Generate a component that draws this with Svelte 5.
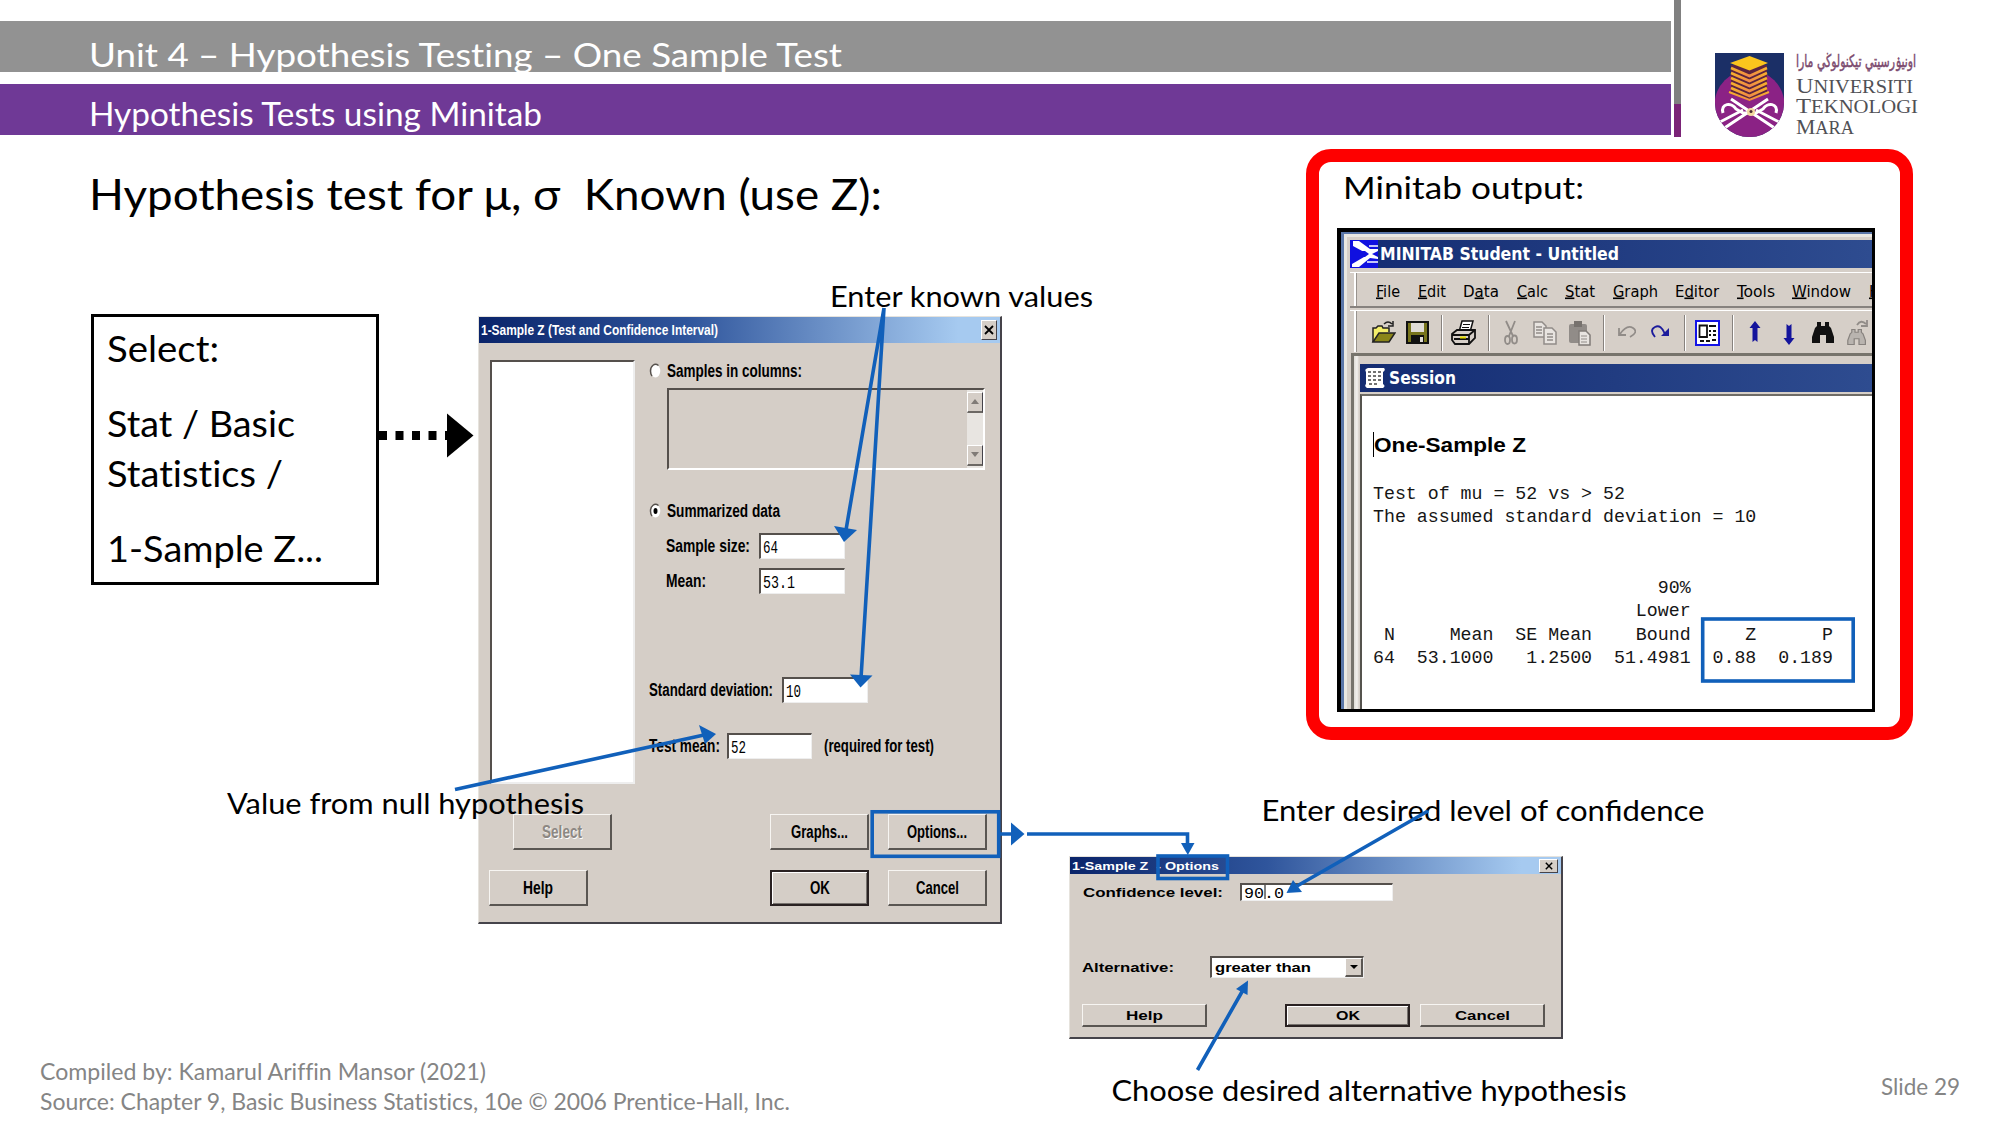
<script>
  const menu = [
    { pre: '', key: 'F', post: 'ile', w: 24, ml: 26 },
    { pre: '', key: 'E', post: 'dit', w: 28, ml: 18 },
    { pre: 'D', key: 'a', post: 'ta', w: 36, ml: 17 },
    { pre: '', key: 'C', post: 'alc', w: 31, ml: 18 },
    { pre: '', key: 'S', post: 'tat', w: 30, ml: 17 },
    { pre: '', key: 'G', post: 'raph', w: 45, ml: 18 },
    { pre: 'E', key: 'd', post: 'itor', w: 44, ml: 17 },
    { pre: '', key: 'T', post: 'ools', w: 38, ml: 18 },
    { pre: '', key: 'W', post: 'indow', w: 59, ml: 17 },
    { pre: '', key: 'H', post: '', w: 11, ml: 18 }
  ];

  const tools = [
    { id: 'open', w: 25, ml: 21 },
    { id: 'save', w: 23, ml: 10 },
    { id: 'sep', w: 2, ml: 12 },
    { id: 'print', w: 26, ml: 8 },
    { id: 'sep', w: 2, ml: 11 },
    { id: 'cut', w: 14, ml: 14 },
    { id: 'copy', w: 24, ml: 15 },
    { id: 'paste', w: 23, ml: 11 },
    { id: 'sep', w: 2, ml: 12 },
    { id: 'undo', w: 19, ml: 12 },
    { id: 'redo', w: 20, ml: 14 },
    { id: 'sep', w: 2, ml: 14 },
    { id: 'project', w: 25, ml: 9 },
    { id: 'sep', w: 2, ml: 12 },
    { id: 'up', w: 12, ml: 15 },
    { id: 'down', w: 12, ml: 22 },
    { id: 'find', w: 24, ml: 16 },
    { id: 'replace', w: 24, ml: 12 }
  ];

  const report = [
    'Test of mu = 52 vs > 52',
    'The assumed standard deviation = 10',
    '',
    '',
    '                          90%',
    '                        Lower',
    ' N     Mean  SE Mean    Bound     Z      P',
    '64  53.1000   1.2500  51.4981  0.88  0.189'
  ].join('\n');
</script>

{#snippet fit(text, w, size, cls)}
  <svg class="fit {cls}" width={w} height={size}><text x="0" y={size * 0.86} font-size={size} textLength={w} lengthAdjust="spacingAndGlyphs">{text}</text></svg>
{/snippet}

{#snippet button(text, w, cls)}
  <div class="btn {cls}">{@render fit(text, w, cls.includes('small') ? 13 : 17.5, 'ui')}</div>
{/snippet}

{#snippet binoculars()}
  <path d="M6 2h4v4h4V2h4v4l2 2 3 9v6h-8v-8h-6v8H1v-6l3-9 2-2z" />
{/snippet}

<main class="slide">
  <header>
    <div class="bars">
      <div class="bar unit">{@render fit('Unit 4 – Hypothesis Testing – One Sample Test', 753, 33, 'lato')}</div>
      <div class="bar topic">{@render fit('Hypothesis Tests using Minitab', 453, 33, 'lato')}</div>
    </div>
    <div class="divider"></div>
    <div class="brand">
      <svg class="shield" width="69" height="84" viewBox="0 0 69 84">
        <defs>
          <clipPath id="crest"><path d="M0 0H69V50A34.500 34 0 0 1 0 50Z" /></clipPath>
          <linearGradient id="gold" x1="0" y1="0" x2="0" y2="1"><stop offset="0" stop-color="#f6b02c" /><stop offset="1" stop-color="#f08a45" /></linearGradient>
        </defs>
        <g clip-path="url(#crest)">
          <rect width="69" height="84" fill="#1b2f66" />
          <circle cx="34.500" cy="52" r="35" fill="#8b2285" />
          <path d="M16 12V39L34.500 48 52 39V12Z" fill="#5b2440" />
          <path d="M15 10 34.500 3 53 10 34.500 17.500Z" fill="#fbc51d" />
          <g fill="none" stroke="url(#gold)" stroke-width="2.600">
            <path d="M16 15 34.500 23 52 15" /><path d="M16 20 34.500 28 52 20" /><path d="M16 25 34.500 33 52 25" />
            <path d="M16 30 34.500 38 52 30" /><path d="M16 35 34.500 43 52 35" /><path d="M14 39 34.500 47 54 39" stroke-width="2" />
          </g>
          <g fill="none" stroke="#fff" stroke-width="3">
            <path d="M16 46 61 76M53 46 8 76" />
            <path d="M8 60C5 50 17 49 21 56L28 60H41L48 56C52 49 64 50 61 60" />
            <path d="M5 69 28 57M64 69 41 57" stroke-width="2.600" />
          </g>
          <circle cx="36" cy="59" r="4" fill="#f3d9a0" /><circle cx="36" cy="58.500" r="1.500" fill="#4a2a30" />
        </g>
      </svg>
      <div class="wordmark">
        <svg class="fit jawi" width="120" height="20"><text x="0" y="14" direction="rtl" text-anchor="end" font-size="17" textLength="120" lengthAdjust="spacingAndGlyphs">اونيۏرسيتي تيكنولوڬي مارا</text></svg>
        <svg class="fit caps" width="122" height="20"><text y="19.500" font-size="22" textLength="117" lengthAdjust="spacingAndGlyphs">U<tspan font-size="18.500">NIVERSITI</tspan></text></svg>
        <svg class="fit caps" width="122" height="20"><text y="20" font-size="22" textLength="122" lengthAdjust="spacingAndGlyphs">T<tspan font-size="18.500">EKNOLOGI</tspan></text></svg>
        <svg class="fit caps" width="122" height="20"><text y="20.500" font-size="22" textLength="58" lengthAdjust="spacingAndGlyphs">M<tspan font-size="18.500">ARA</tspan></text></svg>
      </div>
    </div>
  </header>

  <h1>{@render fit('Hypothesis test for μ, σ  Known (use Z):', 793, 43, 'lato')}</h1>

  <section class="steps">
    {@render fit('Select:', 112, 36, 'lato')}
    <div class="path">
      {@render fit('Stat / Basic', 188, 36, 'lato')}
      {@render fit('Statistics /', 176, 36, 'lato')}
    </div>
    <div class="last">{@render fit('1-Sample Z...', 216, 36, 'lato')}</div>
  </section>

  <section class="dialog ztest">
    <div class="titlebar">
      {@render fit('1-Sample Z (Test and Confidence Interval)', 237, 15.500, 'ui white')}
      <div class="close"><svg width="10" height="10" viewBox="0 0 10 10"><path d="M1 1 9 9M9 1 1 9" /></svg></div>
    </div>
    <div class="panes">
      <div class="list"></div>
      <div class="form">
        <div class="choice">
          <svg class="radio" width="13" height="16" viewBox="0 0 13 16"><ellipse cx="6.500" cy="8" rx="4.800" ry="6.500" fill="#fff" /><path d="M9.500 2.500C5.500-.5 1.500 3 1.500 8q0 3 1.500 5" fill="none" stroke="#55504c" stroke-width="1.500" /></svg>
          {@render fit('Samples in columns:', 135, 17.500, 'ui')}
        </div>
        <div class="columns">
          <div class="scroll">
            <div class="arrow"><svg width="8" height="6" viewBox="0 0 8 6"><path d="M0 5H8L4 0Z" /></svg></div>
            <div class="arrow"><svg width="8" height="6" viewBox="0 0 8 6"><path d="M0 0H8L4 5Z" /></svg></div>
          </div>
        </div>
        <div class="choice summary">
          <svg class="radio" width="13" height="16" viewBox="0 0 13 16"><ellipse cx="6.500" cy="8" rx="4.800" ry="6.500" fill="#fff" /><path d="M9.500 2.500C5.500-.5 1.500 3 1.500 8q0 3 1.500 5" fill="none" stroke="#55504c" stroke-width="1.500" /><ellipse cx="6.500" cy="8" rx="2" ry="3" fill="#000" /></svg>
          {@render fit('Summarized data', 113, 17.500, 'ui')}
        </div>
        <div class="field size"><div class="name">{@render fit('Sample size:', 84, 17.500, 'ui')}</div><div class="input">{@render fit('64', 15, 18, 'mono')}</div></div>
        <div class="field mean"><div class="name">{@render fit('Mean:', 40, 17.500, 'ui')}</div><div class="input">{@render fit('53.1', 32, 18, 'mono')}</div></div>
        <div class="field deviation">{@render fit('Standard deviation:', 124, 17.500, 'ui')}<div class="input">{@render fit('10', 15, 18, 'mono')}</div></div>
        <div class="field test">{@render fit('Test mean:', 71, 17.500, 'ui')}<div class="input">{@render fit('52', 15, 18, 'mono')}</div>{@render fit('(required for test)', 110, 17.500, 'ui')}</div>
      </div>
    </div>
    <div class="actions first">
      {@render button('Select', 40, 'disabled push')}
      {@render button('Graphs...', 57, '')}
      {@render button('Options...', 60, '')}
    </div>
    <div class="actions second">
      {@render button('Help', 30, 'push')}
      {@render button('OK', 20, 'default')}
      {@render button('Cancel', 43, '')}
    </div>
  </section>

  <section class="dialog options">
    <div class="titlebar">
      {@render fit('1-Sample Z  - Options', 147, 11.500, 'ui white')}
      <div class="close"><svg width="10" height="8" viewBox="0 0 10 10"><path d="M1 1 9 9M9 1 1 9" /></svg></div>
    </div>
    <div class="field level"><div class="name">{@render fit('Confidence level:', 140, 13, 'ui')}</div><div class="input"><svg class="fit mono" width="44" height="15"><text y="12.500" font-size="14.500" textLength="40" lengthAdjust="spacingAndGlyphs">90.0</text><path d="M21 0V14" stroke="#000" /></svg></div></div>
    <div class="field alternative"><div class="name">{@render fit('Alternative:', 92, 13, 'ui')}</div><div class="input">{@render fit('greater than', 96, 13, 'ui')}<div class="drop"><svg width="8" height="5" viewBox="0 0 8 5"><path d="M0 0H8L4 4Z" /></svg></div></div></div>
    <div class="actions">
      {@render button('Help', 37, 'small push')}
      {@render button('OK', 24, 'small default')}
      {@render button('Cancel', 55, 'small')}
    </div>
  </section>

  <section class="output">
    <h2>{@render fit('Minitab output:', 241, 31.500, 'lato')}</h2>
    <div class="app">
      <div class="apptitle">
        <svg width="28" height="28" viewBox="0 0 28 28"><rect width="28" height="28" fill="#1010e0" /><path d="M19 6H28M17 22H28" fill="none" stroke="#fff" stroke-width="1.300" /><path d="M3 1H9L20 9H28V11L22 14 28 17V19L20 18 9 27H2V24L14 17H2V12H14L3 6Z" fill="#fff" /><path d="M2 11H15L19 14 15 17H2Z" fill="#1010e0" /></svg>
        {@render fit('MINITAB Student - Untitled', 239, 18, 'tahoma white')}
      </div>
      <div class="menubar">
        {#each menu as m}
          <svg class="fit menu" width={m.w} height="18" style:margin-left="{m.ml}px"><text y="15.500" font-size="16" textLength={m.w} lengthAdjust="spacingAndGlyphs">{m.pre}<tspan class="key">{m.key}</tspan>{m.post}</text></svg>
        {/each}
      </div>
      <div class="toolbar">
        {#each tools as t}
          {#if t.id === 'sep'}
            <div class="sep" style:margin-left="{t.ml}px"></div>
          {:else}
            <svg width={t.w} height="26" viewBox="0 0 {t.w} 26" style:margin-left="{t.ml}px">
              {#if t.id === 'open'}
                <path d="M2 22V8H5L7 6H11L12 8H18V12" fill="#f4ee6a" stroke="#222" stroke-width="1.500" /><path d="M2 22 8 13H24L18 22Z" fill="#8a8518" stroke="#222" stroke-width="1.500" /><path d="M13 4Q17 0 21 4M22 1V6H17" fill="none" stroke="#222" stroke-width="1.500" />
              {:else if t.id === 'save'}
                <rect x="1" y="2" width="21" height="21" fill="#77741c" stroke="#111" stroke-width="2" /><rect x="5" y="3" width="13" height="9" fill="#e0dcd6" /><rect x="5" y="15" width="13" height="8" fill="#111" /><rect x="14" y="17" width="3" height="5" fill="#e0dcd6" />
              {:else if t.id === 'print'}
                <path d="M8 12 11 1H22L19 12Z" fill="#fff" stroke="#111" stroke-width="1.500" /><path d="M12 4.500H19M11 7.500H18" stroke="#111" /><path d="M1 14 6 10H24V18L18 24H4L1 20Z" fill="#d6cfc8" stroke="#111" stroke-width="1.800" /><path d="M1 15H18L24 10M18 15V24M3 19H18" fill="none" stroke="#111" stroke-width="1.800" /><path d="M9 17.500H15" stroke="#e8e000" stroke-width="2" />
              {:else if t.id === 'cut'}
                <path d="M2 1 9 16M11 1 5 16" stroke="#918c88" stroke-width="1.800" /><g fill="none" stroke="#918c88" stroke-width="1.800"><ellipse cx="3.500" cy="20" rx="2.500" ry="4" /><ellipse cx="10.500" cy="19.500" rx="2.500" ry="4" /></g>
              {:else if t.id === 'copy'}
                <g fill="#e8e4e0" stroke="#918c88" stroke-width="1.500"><path d="M1 2H9L13 6V17H1Z" /><path d="M11 8H19L23 12V24H11Z" /></g><path d="M3 7H9M3 10H9M3 13H9M14 14H20M14 17H20M14 20H20" stroke="#918c88" stroke-width="1.300" />
              {:else if t.id === 'paste'}
                <rect x="1" y="4" width="18" height="19" rx="2" fill="#918c88" /><rect x="6" y="1" width="8" height="6" fill="#77726e" /><path d="M11 11H18L22 15V25H11Z" fill="#e8e4e0" stroke="#807b77" stroke-width="1.500" /><path d="M13 16H19M13 19H19M13 22H19" stroke="#918c88" />
              {:else if t.id === 'undo'}
                <path d="M2 8V15H9M3 14Q10 4 16 8T13 17" fill="none" stroke="#918c88" stroke-width="1.800" />
              {:else if t.id === 'redo'}
                <path d="M15 14Q11 4 5 7T5 17" fill="none" stroke="#1c1c9c" stroke-width="1.900" /><path d="M19 8V16H11Z" fill="#1c1c9c" />
              {:else if t.id === 'project'}
                <rect x="1" y="1" width="23" height="24" fill="#fff" stroke="#1414e6" stroke-width="2" /><path d="M4.500 5.500H12V17H4.500Z" fill="none" stroke="#111" stroke-width="1.800" /><path d="M14 6H21M14 11H16M18 11H21M14 15H16M18 15H21M5 21H9M11 21H15M17 20H21" stroke="#111" stroke-width="2" />
              {:else if t.id === 'up'}
                <path d="M6 1 11.500 8H8.500V22L6 20 3.500 22V8H.5Z" fill="#14149c" />
              {:else if t.id === 'down'}
                <path d="M6 25 11.500 18H8.500V4L6 6 3.500 4V18H.5Z" fill="#14149c" />
              {:else if t.id === 'find'}
                <g fill="#111">{@render binoculars()}</g>
              {:else}
                <path d="M10 5Q14 -1 19 4M20 0V6H14" fill="none" stroke="#918c88" stroke-width="1.800" /><g fill="#b9b4af" stroke="#87827e" stroke-width="1.500" transform="translate(0 8) scale(.8 .72)">{@render binoculars()}</g>
              {/if}
            </svg>
          {/if}
        {/each}
      </div>
      <div class="session">
        <div class="sessiontitle">
          <svg width="22" height="22" viewBox="0 0 22 22"><path d="M4 1H20Q22 3 19 5V17Q22 19 19 21H3Q0 19 2 17V5Q0 2 4 1Z" fill="#fff" /><path d="M4 5H7M9 5H12M14 5H17M4 9H7M9 9H12M14 9H17M4 13H7M9 13H12M14 13H17M5 17H8M10 17H13" stroke="#444" stroke-width="1.600" /></svg>
          {@render fit('Session', 67, 18, 'tahoma white')}
        </div>
        <div class="paper">
          <div class="result">{@render fit('One-Sample Z', 152, 20, 'arial')}</div>
          <pre>{report}</pre>
        </div>
      </div>
    </div>
  </section>

  <svg class="notes" width="2000" height="1125" viewBox="0 0 2000 1125">
    <g class="caption">
      <text x="830" y="307" textLength="263" lengthAdjust="spacingAndGlyphs">Enter known values</text>
      <text x="227" y="814" textLength="357" lengthAdjust="spacingAndGlyphs">Value from null hypothesis</text>
      <text x="1261.500" y="821" textLength="443" lengthAdjust="spacingAndGlyphs">Enter desired level of confidence</text>
      <text x="1111.500" y="1101" textLength="515" lengthAdjust="spacingAndGlyphs">Choose desired alternative hypothesis</text>
    </g>
    <path d="M379 435.500H447" stroke="#000" stroke-width="9" stroke-dasharray="8 8.500" />
    <path d="M447 413.500 473.500 435.500 447 457.500Z" />
    <g class="line">
      <path d="M884 308 846 530M884 308 861 678M455 789.500 704 735M1428 811 1297 886M1197.500 1070 1243 990" />
      <path d="M1000 834H1013M1027 834H1187.500V845" />
      <rect x="872.200" y="811.800" width="126.500" height="44.500" />
      <rect x="1158" y="856" width="69.500" height="22.500" />
      <rect x="1702.700" y="619" width="150.500" height="62" />
    </g>
    <g class="tip">
      <path d="M834 526 857 530 844 542Z" />
      <path d="M850 674.500 872.500 675.500 860.500 687.500Z" />
      <path d="M699 725 705 744 716 734Z" />
      <path d="M1011 822.500 1024.500 834 1011 845.500Z" />
      <path d="M1181 843H1194.500L1187.800 855Z" />
      <path d="M1286.500 893 1293 880 1302 892Z" />
      <path d="M1248 980.500 1236 989 1247.500 995Z" />
    </g>
  </svg>

  <footer>
    <div class="credits">
      {@render fit('Compiled by: Kamarul Ariffin Mansor (2021)', 446, 22.500, 'lato')}
      {@render fit('Source: Chapter 9, Basic Business Statistics, 10e © 2006 Prentice-Hall, Inc.', 750, 22.500, 'lato')}
    </div>
    {@render fit('Slide 29', 79, 22.500, 'lato')}
  </footer>
</main>

<style>
  :global(body) { margin: 0; background: #fff; }
  .slide { position: relative; width: 2000px; height: 1125px; overflow: hidden; background: #fff; color: #000; display: flex; flex-direction: column; box-sizing: border-box; font-variant-ligatures: none; }
  .slide :global(svg) { display: block; flex: none; }
  .fit { overflow: visible; white-space: pre; }
  .fit text { white-space: pre; fill: currentColor; }
  .lato { font-family: Lato, 'Open Sans', sans-serif; }
  .ui { font-family: 'Liberation Sans', sans-serif; font-weight: 700; }
  .ztest .ui { font-family: 'Liberation Sans Narrow', 'Liberation Sans', sans-serif; }
  .arial { font-family: 'Liberation Sans', sans-serif; font-weight: 700; }
  .tahoma { font-family: 'DejaVu Sans Condensed', 'DejaVu Sans', sans-serif; font-weight: 700; }
  .menu { font-family: 'DejaVu Sans Condensed', 'DejaVu Sans', sans-serif; }
  .mono { font-family: 'Liberation Mono', monospace; }
  .white { color: #fff; }
  .key { text-decoration: underline; }

  header { display: flex; height: 140px; }
  .bars { width: 1671px; padding-top: 21px; display: flex; flex-direction: column; gap: 12px; }
  .bar { height: 51px; box-sizing: border-box; padding-left: 89px; color: #fff; overflow: hidden; }
  .unit { background: #929292; padding-top: 18px; }
  .topic { background: #6f3996; padding-top: 14px; }
  .divider { width: 7px; height: 137px; margin-left: 3px; background: linear-gradient(#808080 104px, #7a2377 104px); }
  .brand { display: flex; gap: 12px; padding: 53px 0 0 34px; }
  .wordmark { color: #505055; display: flex; flex-direction: column; }
  .jawi { font-family: 'DejaVu Sans', sans-serif; color: #7b4a6e; }
  .jawi text { stroke: #7b4a6e; stroke-width: 0.5; }
  .caps { font-family: 'Liberation Serif', serif; }

  h1 { margin: 33px 0 0 89px; font-weight: 400; }

  .steps { position: absolute; left: 91px; top: 314px; width: 288px; height: 271px; box-sizing: border-box; border: 3.5px solid #000; padding: 14px 0 0 13px; }
  .path { margin-top: 39px; display: flex; flex-direction: column; gap: 14px; }
  .last { margin: 39px 0 0 0; }

  .dialog { position: absolute; box-sizing: border-box; background: #d5cec7; border: 1px solid #e6e3dd; border-right: 2px solid #45434a; border-bottom: 2px solid #45434a; }
  .titlebar { display: flex; align-items: center; justify-content: space-between; background: linear-gradient(90deg, #0a246a, #2f559c 40%, #a6caf0 92%); padding: 0 3px 0 2px; }
  .close { display: flex; align-items: center; justify-content: center; background: #d5cec7; border: 1px solid #fff; border-right-color: #45434a; border-bottom-color: #45434a; box-sizing: border-box; }
  .close path { stroke: #000; stroke-width: 1.8; }
  .ztest { left: 478px; top: 316px; width: 524px; height: 608px; }
  .ztest .titlebar { height: 26px; }
  .ztest .close { width: 16px; height: 20px; }
  .panes { display: flex; padding: 17px 0 0 11px; }
  .list { width: 145px; height: 424px; box-sizing: border-box; background: #fff; border: 2px solid #55504c; border-right-color: #eee; border-bottom-color: #eee; }
  .form { margin-left: 14px; }
  .choice { display: flex; align-items: center; gap: 5px; height: 21px; }
  .columns { margin: 7px 0 0 18px; width: 318px; height: 82px; box-sizing: border-box; border: 2px solid #55504c; border-right-color: #fff; border-bottom-color: #fff; display: flex; justify-content: flex-end; }
  .scroll { width: 16px; background: #e8e5e1; display: flex; flex-direction: column; justify-content: space-between; padding: 2px 0; }
  .arrow { height: 21px; box-sizing: border-box; background: #d5cec7; border: 1px solid #fff; border-right-color: #45434a; border-bottom: 2px solid #6c6864; display: flex; align-items: center; justify-content: center; }
  .arrow path { fill: #807b77; }
  .summary { margin-top: 30px; }
  .field { display: flex; align-items: center; }
  .input { box-sizing: border-box; background: #fff; border: 2px solid #55504c; border-right: 1px solid #eee; border-bottom: 1px solid #eee; display: flex; align-items: center; padding-left: 2px; }
  .ztest .input { width: 86px; height: 26px; }
  .size { margin: 12px 0 0 17px; }
  .mean { margin: 9px 0 0 17px; }
  .size .name, .mean .name { width: 93px; }
  .deviation { margin-top: 83px; gap: 9px; }
  .test { margin-top: 30px; }
  .test .input { margin: 0 12px 0 7px; width: 85px; }
  .actions { display: flex; }
  .btn { box-sizing: border-box; width: 99px; height: 36px; display: flex; align-items: center; justify-content: center; background: #d5cec7; border: 1px solid #f7f5f2; border-right: 2px solid #5a5652; border-bottom: 2px solid #5a5652; }
  .default { border: 2px solid #2a2222; box-shadow: inset 1px 1px #fff, inset -1px -1px #77726e; }
  .disabled { color: #8d8883; text-shadow: 1px 1px #fff; }
  .ztest .actions { gap: 19px; }
  .ztest .first { padding-left: 34px; margin-top: 30px; }
  .ztest .first .push { margin-right: 139px; }
  .ztest .second { padding-left: 10px; margin-top: 20px; }
  .ztest .second .push { margin-right: 163px; }

  .options { left: 1069px; top: 856px; width: 494px; height: 183px; }
  .options .titlebar { height: 17px; }
  .options .close { width: 19px; height: 14px; }
  .level { margin: 9px 0 0 13px; }
  .level .name { width: 157px; }
  .level .input { width: 153px; height: 18px; }
  .alternative { margin: 55px 0 0 12px; }
  .alternative .name { width: 128px; }
  .alternative .input { width: 154px; height: 22px; padding-left: 3px; justify-content: space-between; }
  .drop { width: 18px; height: 19px; box-sizing: border-box; background: #d5cec7; border: 1px solid #fff; border-right: 2px solid #5a5652; border-bottom: 2px solid #5a5652; display: flex; align-items: center; justify-content: center; }
  .options .actions { margin: 26px 0 0 12px; gap: 10px; }
  .small { width: 125px; height: 23px; }
  .options .push { margin-right: 68px; }

  .output { position: absolute; left: 1306px; top: 149px; width: 607px; height: 591px; box-sizing: border-box; border: 13px solid #fe0000; border-radius: 25px; background: #fff; }
  h2 { margin: 10px 0 0 24px; height: 56px; font-weight: 400; }
  .app { margin-left: 18px; width: 538px; height: 484px; box-sizing: border-box; border: 4px solid #000; border-right-width: 3px; border-bottom-width: 3px; overflow: hidden; background: #d6cfc8; box-shadow: inset 3px 2px #5a76a8, inset 6px 5px #e9e7e2; padding: 8px 0 0 9px; }
  .apptitle { height: 28px; display: flex; align-items: center; gap: 2px; background: linear-gradient(90deg, #142c72, #2e4c90); }
  .menubar { width: 560px; height: 36px; margin-top: 4px; box-sizing: border-box; display: flex; align-items: center; padding-top: 0; background: linear-gradient(90deg, #d6cfc8 4px, #fff 4px 6px, #98938e 6px 7px, #d6cfc8 7px); border-top: 1px solid #fff; border-bottom: 2px solid #87827e; }
  .toolbar { width: 560px; height: 42px; margin-top: 2px; box-sizing: border-box; display: flex; align-items: center; padding-top: 2px; background: linear-gradient(90deg, #d6cfc8 4px, #fff 4px 6px, #98938e 6px 7px, #d6cfc8 7px); border-top: 1px solid #fff; }
  .sep { flex: none; width: 2px; height: 36px; box-sizing: border-box; border-left: 1px solid #87827e; background: #fff; }
  .session { margin: 1px 0 0 1px; height: 370px; box-sizing: border-box; border-top: 3px solid #77746c; border-left: 3px solid #77746c; padding: 8px 0 0 6px; background: linear-gradient(90deg, #dedbd5, #f3f1ee 3px, #d6cfc8 5px); }
  .sessiontitle { height: 28px; display: flex; align-items: center; gap: 3px; padding-left: 4px; background: linear-gradient(90deg, #142c72, #2e4c90); }
  .paper { height: 330px; margin-top: 2px; background: #fff; border-top: 2px solid #6f6c66; border-left: 2px solid #55534e; padding: 36px 0 0 11px; }
  .result { border-left: 1px solid #000; height: 25px; display: flex; align-items: center; }
  pre { margin: 26px 0 0 0; font: 18.25px/23.45px 'Liberation Mono', monospace; color: #161616; }

  .notes { position: absolute; left: 0; top: 0; }
  .caption { font: 28px Lato, 'Open Sans', sans-serif; }
  .line { fill: none; stroke: #1160ba; stroke-width: 3.6; }
  .tip { fill: #1160ba; }

  footer { position: absolute; left: 40px; right: 40px; bottom: 12px; display: flex; justify-content: space-between; align-items: center; color: #858585; }
  .credits { display: flex; flex-direction: column; gap: 7px; }
</style>
